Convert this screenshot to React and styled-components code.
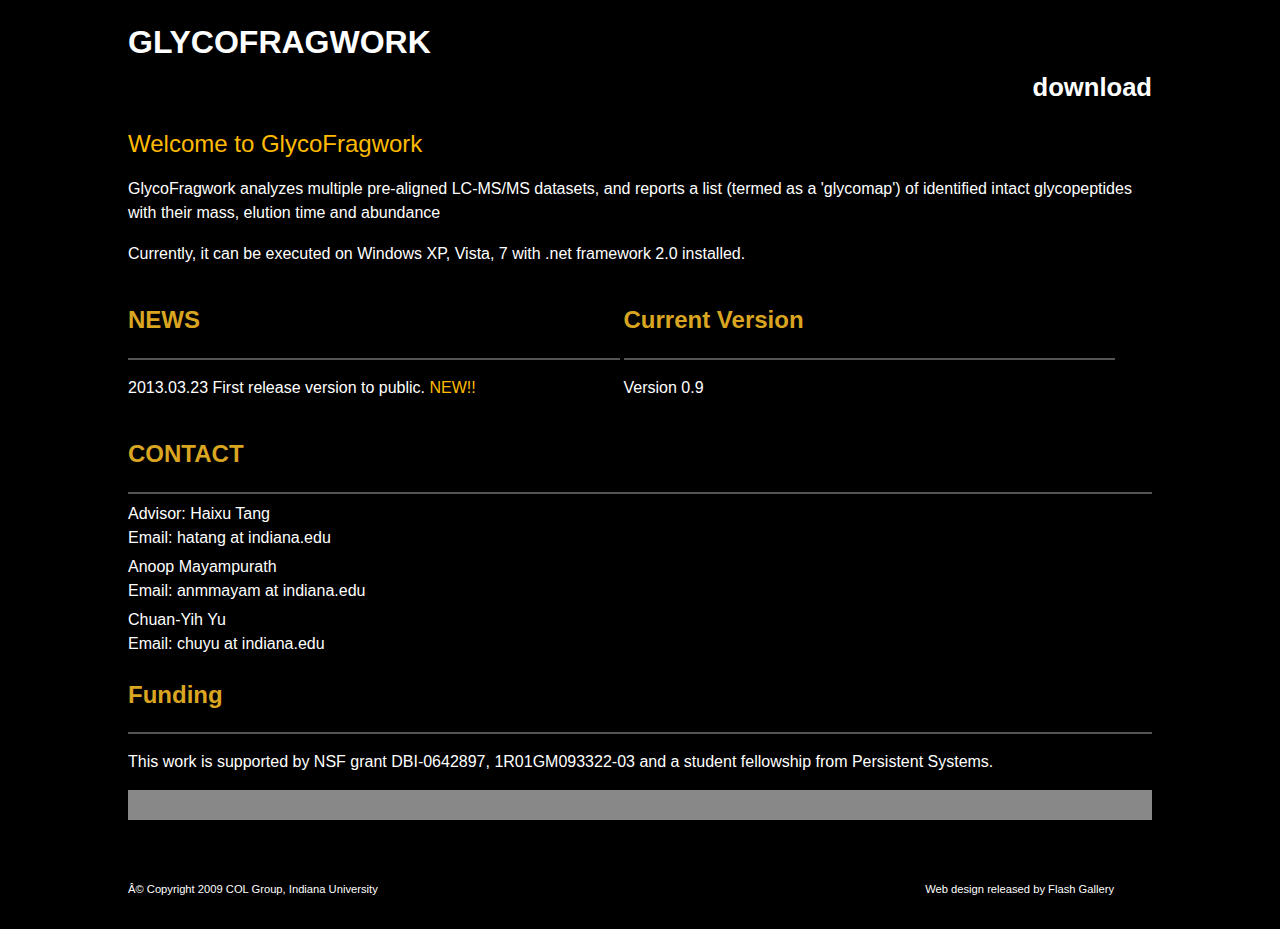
import React from "react";
import styled, { createGlobalStyle } from "styled-components";

const GlobalStyle = createGlobalStyle`
    html, body {
        margin: 0;
        padding: 0;
        background: #000;
    }
    body {
        font-family: "Liberation Sans", Arial, sans-serif;
        font-size: 16px;
        color: #fff;
    }
`;

const Page = styled.div`
    width: 1024px;
    margin: 0 auto;
    padding: 24px 0 20px;
`;

const SiteTitle = styled.h1`
    margin: 0;
    font-size: 32px;
    line-height: 36px;
    font-weight: bold;
`;

const Nav = styled.div`
    margin-top: 12px;
    text-align: right;
    font-size: 25.6px;
    line-height: 30px;
    font-weight: bold;

    a {
        color: #fff;
        text-decoration: none;
    }
`;

const Welcome = styled.h2`
    margin: 28px 0 19px;
    font-size: 24px;
    line-height: 28px;
    font-weight: normal;
    color: #ffbb00;
`;

const Para = styled.p`
    margin: 0 0 ${(p) => p.$gap ?? 17}px;
    line-height: 24px;
`;

const Columns = styled.div`
    display: flex;
    gap: 4px;
    margin-top: 40px;
`;

const Section = styled.div`
    width: ${(p) => p.$width || "100%"};
    margin-top: ${(p) => p.$top ?? 0}px;
`;

const Heading = styled.h3`
    margin: 0 0 ${(p) => p.$gap ?? 24}px;
    font-size: 24px;
    line-height: 28px;
    font-weight: bold;
    color: #daa520;
`;

const Rule = styled.div`
    height: 2px;
    background: #555;
    margin-bottom: ${(p) => p.$after ?? 16}px;
`;

const New = styled.span`
    color: #ffbb00;
`;

const Contact = styled.p`
    margin: 0 0 5px;
    line-height: 24px;
`;

const GrayBar = styled.div`
    height: 30px;
    background: #888;
    margin-top: 16px;
`;

const Footer = styled.div`
    display: flex;
    justify-content: space-between;
    padding-right: 38px;
    margin-top: 62px;
    font-size: 11.2px;
    line-height: 14px;
`;

export default function App() {
    return (
        <>
            <GlobalStyle />
            <Page>
                <SiteTitle>GLYCOFRAGWORK</SiteTitle>
                <Nav>
                    <a href="#download">download</a>
                </Nav>

                <Welcome>Welcome to GlycoFragwork</Welcome>
                <Para>
                    GlycoFragwork analyzes multiple pre-aligned LC-MS/MS datasets, and reports a list
                    (termed as a 'glycomap') of identified intact glycopeptides with their mass,
                    elution time and abundance
                </Para>
                <Para $gap={0}>
                    Currently, it can be executed on Windows XP, Vista, 7 with .net framework 2.0
                    installed.
                </Para>

                <Columns>
                    <Section $width="48%">
                        <Heading>NEWS</Heading>
                        <Rule />
                        <Para $gap={0}>
                            2013.03.23 First release version to public. <New>NEW!!</New>
                        </Para>
                    </Section>
                    <Section $width="48%">
                        <Heading>Current Version</Heading>
                        <Rule />
                        <Para $gap={0}>Version 0.9</Para>
                    </Section>
                </Columns>

                <Section $top={40}>
                    <Heading>CONTACT</Heading>
                    <Rule $after={8} />
                    <Contact>
                        Advisor: Haixu Tang<br />
                        Email: hatang at indiana.edu
                    </Contact>
                    <Contact>
                        Anoop Mayampurath<br />
                        Email: anmmayam at indiana.edu
                    </Contact>
                    <Contact>
                        Chuan-Yih Yu<br />
                        Email: chuyu at indiana.edu
                    </Contact>
                </Section>

                <Section $top={25}>
                    <Heading $gap={23}>Funding</Heading>
                    <Rule />
                    <Para $gap={0}>
                        This work is supported by NSF grant DBI-0642897, 1R01GM093322-03 and a
                        student fellowship from Persistent Systems.
                    </Para>
                    <GrayBar />
                </Section>

                <Footer>
                    <span>Â© Copyright 2009 COL Group, Indiana University</span>
                    <span>Web design released by Flash Gallery</span>
                </Footer>
            </Page>
        </>
    );
}
